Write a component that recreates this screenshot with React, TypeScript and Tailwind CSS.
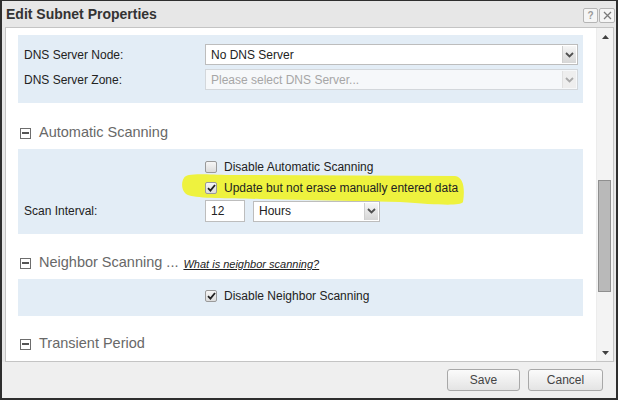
import React from 'react';

const font = "font-['Liberation_Sans',Arial,sans-serif]";

function Chevron({ muted }: { muted?: boolean }): JSX.Element {
  return (
    <svg width="9" height="6" viewBox="0 0 9 6">
      <path d="M1 1 L4.5 4.5 L8 1" fill="none" stroke={muted ? '#a9a9a9' : '#505050'} strokeWidth="1.8" />
    </svg>
  );
}

function Select({ value, width, disabled }: { value: string; width: string; disabled?: boolean }): JSX.Element {
  return (
    <div
      className={`relative z-10 flex h-[21px] ${width} items-stretch border ${
        disabled ? 'border-[#d3d7db] bg-[#f6f8fa] text-[#a6a6a6]' : 'border-[#bdbdbd] bg-white text-[#222]'
      }`}
    >
      <div className="flex flex-1 items-center pl-[5px] text-[12px]">{value}</div>
      <div
        className={`m-px flex w-[14px] items-center justify-center border-l ${
          disabled ? 'border-[#e0e0e0] bg-[#eeeeee]' : 'border-[#cfcfcf] bg-gradient-to-b from-[#f6f6f6] to-[#d6d6d6]'
        }`}
      >
        <Chevron muted={disabled} />
      </div>
    </div>
  );
}

function Checkbox({ checked }: { checked?: boolean }): JSX.Element {
  return (
    <div className="relative z-10 flex h-[12px] w-[12px] items-center justify-center rounded-[2px] border border-[#9a9a9a] bg-gradient-to-b from-[#f6f6f6] to-[#dcdcdc]">
      {checked && (
        <svg width="9" height="8" viewBox="0 0 9 8">
          <path d="M1 4.2 L3.4 6.6 L8 1" fill="none" stroke="#222" strokeWidth="1.8" />
        </svg>
      )}
    </div>
  );
}

function SectionHeader({ title, children, mt }: { title: string; children?: React.ReactNode; mt: string }): JSX.Element {
  return (
    <div className={`${mt} mb-[5px] flex h-[22px] items-center pl-[2px]`}>
      <div className="flex h-[11px] w-[11px] items-center justify-center border border-[#6d6d6d] bg-white">
        <div className="h-[1.5px] w-[7px] bg-[#555]" />
      </div>
      <span className="ml-[8px] text-[14.5px] text-[#686868]">{title}</span>
      {children}
    </div>
  );
}

function CheckRow({ label, checked }: { label: string; checked?: boolean }): JSX.Element {
  return (
    <div className="flex h-[18px] items-center">
      <div className="w-[187px]" />
      <Checkbox checked={checked} />
      <span className="relative z-10 ml-[7px] text-[12px] text-[#222]">{label}</span>
    </div>
  );
}

export default function App(): JSX.Element {
  return (
    <div className={`relative flex h-[400px] w-[618px] flex-col border-x-2 border-t border-b-2 border-[#2e2e2e] bg-[#e7e7e7] ${font}`}>
      {/* title bar */}
      <div className="flex h-[26px] items-center justify-between pl-[4px] pr-[1px]">
        <span className="text-[14px] font-bold text-[#333]">Edit Subnet Properties</span>
        <div className="mt-[2px] flex gap-[1px]">
          <div className="flex h-[15px] w-[15px] items-center justify-center rounded-[2px] border border-[#b5b5b5] bg-[#f5f5f5] text-[10px] font-bold text-[#9a9a9a]">
            ?
          </div>
          <div className="flex h-[15px] w-[16px] items-center justify-center rounded-[2px] border border-[#b5b5b5] bg-[#f5f5f5]">
            <svg width="9" height="9" viewBox="0 0 9 9">
              <path d="M1 1 L8 8 M8 1 L1 8" stroke="#7a7a7a" strokeWidth="1.3" />
            </svg>
          </div>
        </div>
      </div>

      {/* content */}
      <div className="ml-[3px] mr-[2px] flex h-[335px] border border-[#c4c4c4] bg-white">
        <div className="flex-1 overflow-hidden pl-[12px] pr-[13px] pt-[7px]">
          <div className="bg-[#e3edf6] pb-[13px] pt-[9px]">
            <div className="flex h-[21px] items-center">
              <span className="w-[187px] pl-[6px] text-[12px] text-[#222]">DNS Server Node:</span>
              <Select value="No DNS Server" width="w-[373px]" />
            </div>
            <div className="mt-[4px] flex h-[21px] items-center">
              <span className="w-[187px] pl-[6px] text-[12px] text-[#222]">DNS Server Zone:</span>
              <Select value="Please select DNS Server..." width="w-[373px]" disabled />
            </div>
          </div>

          <SectionHeader title="Automatic Scanning" mt="mt-[19px]" />
          <div className="bg-[#e3edf6] pb-[12px] pt-[9px]">
            <CheckRow label="Disable Automatic Scanning" />
            <div className="mt-[3px]">
              <CheckRow label="Update but not erase manually entered data" checked />
            </div>
            <div className="mt-[3px] flex h-[22px] items-center">
              <span className="w-[187px] pl-[6px] text-[12px] text-[#222]">Scan Interval:</span>
              <div className="relative z-10 flex h-[22px] w-[40px] items-center border border-[#bdbdbd] bg-white pl-[5px] text-[12px] text-[#222]">
                12
              </div>
              <div className="ml-[8px]">
                <Select value="Hours" width="w-[127px]" />
              </div>
            </div>
          </div>

          <SectionHeader title="Neighbor Scanning ..." mt="mt-[18px]">
            <span className="ml-[5px] mt-[2px] text-[11px] italic text-[#222] underline">What is neighbor scanning?</span>
          </SectionHeader>
          <div className="bg-[#e3edf6] pb-[11px] pt-[8px]">
            <CheckRow label="Disable Neighbor Scanning" checked />
          </div>

          <SectionHeader title="Transient Period" mt="mt-[17px]" />
        </div>

        {/* scrollbar */}
        <div className="flex w-[17px] flex-col border-l border-[#ececec] bg-[#f3f3f3]">
          <div className="flex h-[17px] items-center justify-center">
            <svg width="7" height="4" viewBox="0 0 7 4">
              <path d="M0 4 L3.5 0 L7 4 Z" fill="#404040" />
            </svg>
          </div>
          <div className="ml-[1px] mt-[135px] h-[112px] w-[13px] border border-[#8f8f8f] bg-[#b9b9b9]" />
          <div className="flex-1" />
          <div className="flex h-[17px] items-center justify-center">
            <svg width="7" height="4" viewBox="0 0 7 4">
              <path d="M0 0 L3.5 4 L7 0 Z" fill="#404040" />
            </svg>
          </div>
        </div>
      </div>

      {/* footer */}
      <div className="flex flex-1 items-center justify-end gap-[8px] bg-[#efefef] pr-[13px]">
        <button className="h-[22px] w-[73px] rounded-[3px] border border-[#a8a8a8] bg-gradient-to-b from-[#fbfbfb] to-[#e4e4e4] text-[12px] text-[#444]">
          Save
        </button>
        <button className="h-[22px] w-[75px] rounded-[3px] border border-[#a8a8a8] bg-gradient-to-b from-[#fbfbfb] to-[#e4e4e4] text-[12px] text-[#444]">
          Cancel
        </button>
      </div>

      {/* highlighter stroke painted under the checkbox text */}
      <svg className="pointer-events-none absolute left-[-2px] top-[-1px]" width="618" height="400" viewBox="0 0 618 400">
        <path
          d="M184 178 C186 173 200 174 230 175 L455 176 C464 177 465 190 463 202 C460 206 440 205 400 202 L260 199 C230 198 200 199 188 195 C181 192 181 182 184 178 Z"
          fill="#eef23e"
        />
      </svg>
    </div>
  );
}
